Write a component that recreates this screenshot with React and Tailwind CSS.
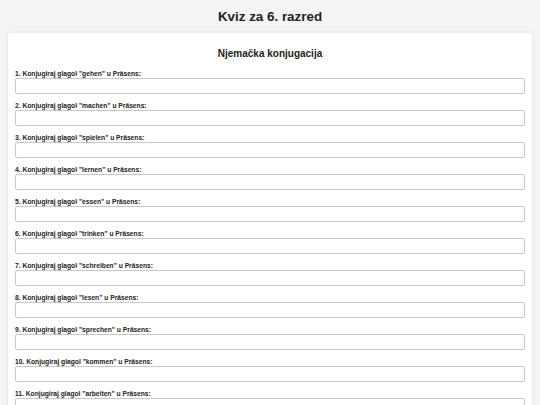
const verbs = [
  "gehen",
  "machen",
  "spielen",
  "lernen",
  "essen",
  "trinken",
  "schreiben",
  "lesen",
  "sprechen",
  "kommen",
  "arbeiten",
]

export default function App() {
  return (
    <div className="min-h-screen bg-[#f4f4f4] font-['Liberation_Sans',Arial,sans-serif] text-[#222]">
      {/* Header */}
      <h1 className="pt-[9px] text-center text-[13.4px] font-bold leading-[16px] text-[#222]">
        Kviz za 6. razred
      </h1>

      {/* Quiz card */}
      <div className="mx-[8px] mt-[8px] rounded-[3px] bg-white px-[7px] pt-[15px] pb-[10px] shadow-[0_0_4px_rgba(0,0,0,0.08)]">
        <h2 className="mb-[10px] text-center text-[10px] font-bold leading-[12px] text-[#222]">
          Njemačka konjugacija
        </h2>

        <div className="flex flex-col gap-[8px]">
          {verbs.map((verb, i) => (
            <div key={verb}>
              <label className="block text-[6.7px] font-bold leading-[8px] text-[#222]">
                {i + 1}. Konjugiraj glagol "{verb}" u Präsens:
              </label>
              <input
                type="text"
                className="block h-[16px] w-full rounded-[2px] border border-[#c8c8c8] bg-white px-[3px] text-[6.7px] outline-none"
              />
            </div>
          ))}
        </div>
      </div>
    </div>
  )
}
